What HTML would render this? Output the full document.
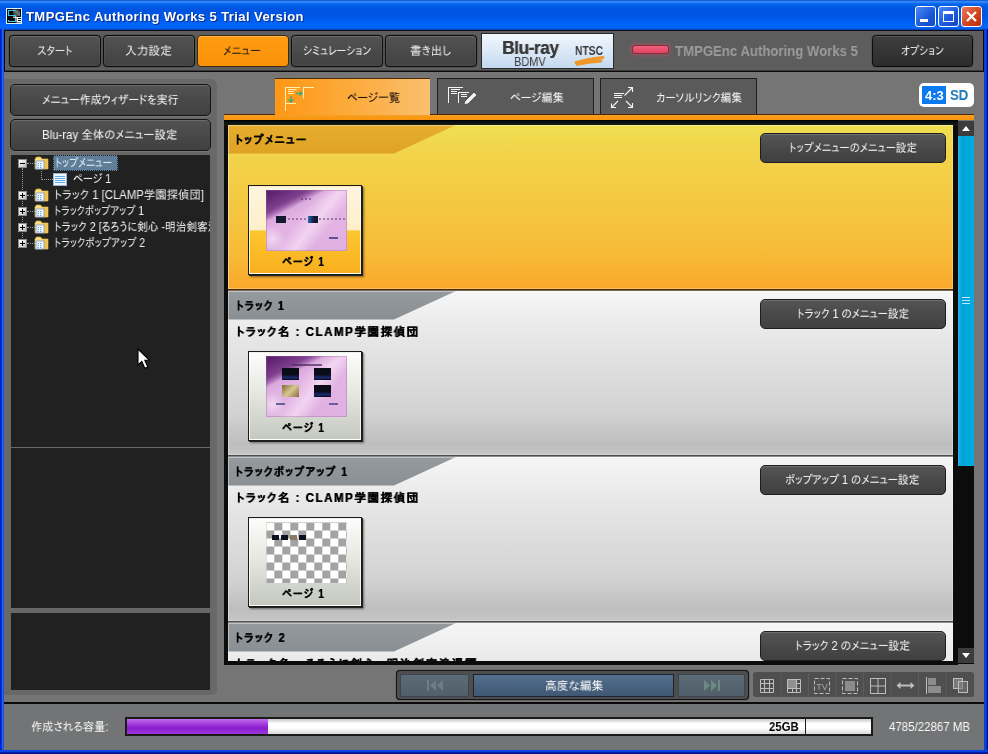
<!DOCTYPE html>
<html lang="ja">
<head>
<meta charset="utf-8">
<title>TMPGEnc Authoring Works 5 Trial Version</title>
<style>
html,body{margin:0;padding:0;}
body{width:988px;height:754px;overflow:hidden;position:relative;background:#0a46d6;
 font-family:"Liberation Sans","IPAPGothic","IPAGothic","Noto Sans CJK JP",sans-serif;font-size:12px;color:#fff;}
div,span{box-sizing:border-box;}
.a{position:absolute;}
.t{position:absolute;white-space:nowrap;transform-origin:0 50%;will-change:transform;}
#title{position:absolute;left:0;top:0;width:988px;height:30px;
 background:linear-gradient(#0a4fc6 0%,#3c8ffc 6%,#0a6bf0 12%,#0060e8 17%,#0055e3 26%,#0054e3 45%,#0058ea 60%,#0064fa 80%,#0066ff 90%,#0a5ae0 96%,#0038b0 100%);}
#client{position:absolute;left:4px;top:30px;width:980px;height:720px;background:#757575;}
#toolbar{position:absolute;left:4px;top:30px;width:980px;height:42px;background:#5d5d5d;border:1px solid #0a0a0a;border-top-color:#0c0c1c;box-shadow:inset 0 -1px 0 #3a3a3a;}
.tbtn{position:absolute;top:35px;height:32px;width:92px;border:1px solid #0c0c0c;border-radius:4px;
 background:linear-gradient(#535353,#484848 60%,#424242);box-shadow:inset 0 1px 0 #6c6c6c,inset 0 0 0 1px rgba(255,255,255,.05),0 0 1px #000;
 text-align:center;line-height:29px;font-size:12px;color:#f0f0f0;white-space:nowrap;}
.tbtn.on{background:linear-gradient(#ff9c12,#fb9208);color:#111;box-shadow:inset 0 1px 0 #ffb648;border-color:#3a2a10;}
.tbtn.dark{background:linear-gradient(#3e3e3e,#2c2c2c);box-shadow:inset 0 1px 0 #585858,0 0 1px #000;}
#bdbox{position:absolute;left:481px;top:33px;width:133px;height:36px;border:1px solid #2a2a2a;
 background:linear-gradient(#f2f7fd,#d9e7f6 55%,#c3d9f0);}
#led{position:absolute;left:632px;top:45px;width:37px;height:9px;border-radius:3px;background:linear-gradient(#f0607c,#e04462);border:1px solid #8a2a3a;box-shadow:0 0 4px 1px rgba(255,80,110,.4);}
#lpanel{position:absolute;left:4px;top:79px;width:213px;height:616px;background:#686868;border-radius:0 6px 6px 0;}
.lbtn{position:absolute;left:10px;width:201px;height:32px;border:1px solid #141414;border-radius:5px;
 background:linear-gradient(#535353,#474747 60%,#414141);box-shadow:inset 0 1px 0 #6c6c6c,0 1px 0 #777;
 text-align:center;line-height:29px;font-size:12px;color:#f0f0f0;white-space:nowrap;}
.tree{position:absolute;left:11px;width:199px;background:#212121;overflow:hidden;}
.exp{position:absolute;width:9px;height:9px;background:linear-gradient(135deg,#fff,#c0c0c0);border:1px solid #8a8a8a;}
.exp:before{content:"";position:absolute;left:1px;top:3px;width:5px;height:1px;background:#000;}
.exp.plus:after{content:"";position:absolute;left:3px;top:1px;width:1px;height:5px;background:#000;}
/* tabs */
.tab{position:absolute;top:78px;height:37px;border:1px solid #1e1e1e;border-bottom:none;background:#5a5a5a;color:#f0f0f0;font-size:12px;line-height:36px;white-space:nowrap;}
.tab.on{background:linear-gradient(90deg,#ff9716,#fcab3c 50%,#fabf70);border:none;border-top:1px solid #4a2c08;color:#111;}
#obar{position:absolute;left:224px;top:115px;width:750px;height:5px;background:linear-gradient(#f0a030,#fa9a12 40%,#f8960e);}
#frame{position:absolute;left:224px;top:120px;width:734px;height:545px;background:linear-gradient(#000,#0a1418 3px,#1a1c08 5px,#0c0c0c 6px);}
#content{position:absolute;left:228px;top:125px;width:725px;height:536px;overflow:hidden;background:#444;}
.sec{position:absolute;left:0;width:725px;height:166px;overflow:hidden;}
.sec:before{content:'';position:absolute;left:0;top:164px;width:725px;height:2px;z-index:3;}
.sec.y:before{background:linear-gradient(#4a2c04 0 1px,#7a6a50 1px 2px);}
.sec.g:before{background:linear-gradient(#4e4e4e 0 1px,#8c8c8c 1px 2px);}
.sec .edge{position:absolute;left:0;top:0;width:725px;height:164px;box-shadow:inset 1px 1px 0 rgba(255,255,255,.4),inset -1px -1px 0 rgba(255,255,255,.25);}
.sec.y{background:no-repeat 0 0/100% 164px linear-gradient(#eee052 0%,#f2d64c 12%,#f4c942 45%,#f7bb38 78%,#faa82c 100%);}
.sec.g{background:no-repeat 0 0/100% 164px linear-gradient(#f6f6f6 0%,#e6e6e6 30%,#d2d2d2 75%,#bebebe 93%,#c6c6c6 100%);}
.ban{position:absolute;left:0;top:0;width:232px;height:28.5px;clip-path:polygon(0 0,228px 0,166px 100%,0 100%);}
.sec.y .ban{background:linear-gradient(#e6ae2e,#dfa224);}
.sec.g .ban{background:linear-gradient(#959a9e,#8a8f93);}
.sbtn{position:absolute;left:532px;top:8px;width:186px;height:30px;border:1px solid #1e1e1e;border-radius:5px;
 background:linear-gradient(#555,#484848 55%,#404040);box-shadow:inset 0 1px 0 #707070;
 text-align:center;line-height:28px;font-size:12px;color:#f0f0f0;white-space:nowrap;}
.th{position:absolute;left:20px;width:114px;height:90px;border:1px solid #1a1a1a;box-shadow:1px 1px 0 #222,2px 2px 2px rgba(0,0,0,.45);}
.th .in{position:absolute;left:0;top:0;width:112px;height:88px;border:1px solid rgba(255,255,255,.75);}
.th.y .in{background:linear-gradient(#fff6e0 0%,#fdeec8 50%,#fcc62e 51%,#f9b01e 100%);}
.th.g .in{background:linear-gradient(#fdfdfb 0%,#e6e8e2 45%,#c4c8be 100%);}
.th .img{position:absolute;left:17px;top:4px;width:81px;height:61px;overflow:hidden;}
.purple{background:linear-gradient(152deg,#561a66 0%,#6a2c7c 12%,#80428f 22%,rgba(150,90,165,.85) 26%,rgba(205,150,210,.35) 31%,rgba(220,170,224,0) 40%),linear-gradient(128deg,rgba(255,255,255,0) 42%,rgba(255,240,255,.55) 58%,rgba(255,255,255,0) 72%),radial-gradient(circle 13px at 8% 80%,rgba(255,255,255,.5) 0,rgba(255,255,255,0) 100%),linear-gradient(#e4b6e4,#e0b0e2);box-shadow:inset 0 0 0 1px rgba(150,100,150,.35);}
.checker{background-color:#fff;background-image:conic-gradient(#a2a2a2 25%,#fff 0 50%,#a2a2a2 0 75%,#fff 0);background-size:16px 16px;background-position:.3px .5px;}
/* scrollbar */
#sbar{position:absolute;left:958px;top:121px;width:16px;height:543px;background:#0c0c0c;}
.sarr{position:absolute;left:0;width:16px;height:15px;background:#3c3c3c;}
.sarr i{position:absolute;left:4px;width:0;height:0;border-left:4px solid transparent;border-right:4px solid transparent;}
#sthumb{position:absolute;left:0;top:15px;width:16px;height:330px;background:linear-gradient(90deg,#2cb2e8 0,#02a2d4 25%,#00a8dc 60%,#04aee2 100%);}
/* bottom */
#navbox{position:absolute;left:396px;top:670px;width:353px;height:30px;border:1px solid #141414;border-radius:4px;background:#4e4e4e;box-shadow:0 0 1px #000;}
.nb{position:absolute;top:674px;height:23px;border:1px solid #3c4650;}
#istrip{will-change:transform;position:absolute;left:753px;top:672px;width:221px;height:25px;background:#4f4f4f;border-radius:3px;}
#hline{position:absolute;left:4px;top:702px;width:980px;height:2px;background:#0a0a0a;}
#status{position:absolute;left:4px;top:704px;width:980px;height:46px;background:#737475;}
#pbar{position:absolute;left:125px;top:717px;width:748px;height:19px;border:2px solid #1a1a1a;background:linear-gradient(#c8c8c8 0%,#fff 30%,#fff 60%,#d8d8d8 100%);}
#pfill{position:absolute;left:0;top:0;width:141px;height:15px;background:linear-gradient(#c070e8 0%,#a840e0 30%,#8a1ccc 60%,#9c38dc 100%);}
</style>
</head>
<body>
<div id="title"></div><span class="t" style="left:26.0px;top:8.0px;font-size:13px;line-height:17px;color:#fff;transform:scaleX(1.003);font-weight:bold;letter-spacing:.4px;text-shadow:1px 1px 0 #0a2a80;">TMPGEnc Authoring Works 5 Trial Version</span>
<div class="a" style="left:0;top:29px;width:4px;height:725px;background:linear-gradient(90deg,#0019cf 0 1px,#0831d9 1px 2px,#2264f0 2px 3px,#1a55d0 3px 4px)"></div><div class="a" style="left:984px;top:29px;width:4px;height:725px;background:linear-gradient(90deg,#0b3fd2 0 1px,#0a46e0 1px 2px,#0630c8 2px 3px,#001396 3px 4px)"></div><div class="a" style="left:0;top:750px;width:988px;height:4px;background:linear-gradient(#0a45e0 0 1px,#0a40d8 1px 2px,#021ea8 2px 3px,#00158f 3px 4px)"></div>
<div id="client"></div>
<div id="toolbar"></div>
<div class="tbtn " style="left:9px;width:92px"></div><span class="t" style="left:36.7px;top:42.5px;font-size:12px;line-height:16px;color:#f0f0f0;transform:scaleX(0.875);">スタート</span>
<div class="tbtn " style="left:103px;width:92px"></div><span class="t" style="left:125.3px;top:42.5px;font-size:12px;line-height:16px;color:#f0f0f0;transform:scaleX(0.975);">入力設定</span>
<div class="tbtn on" style="left:197px;width:92px"></div><span class="t" style="left:222.5px;top:42.5px;font-size:12px;line-height:16px;color:#111;transform:scaleX(0.916);">メニュー</span>
<div class="tbtn " style="left:291px;width:92px"></div><span class="t" style="left:302.8px;top:42.5px;font-size:12px;line-height:16px;color:#f0f0f0;transform:scaleX(0.858);">シミュレーション</span>
<div class="tbtn " style="left:385px;width:92px"></div><span class="t" style="left:410.0px;top:42.5px;font-size:12px;line-height:16px;color:#f0f0f0;transform:scaleX(0.953);">書き出し</span>
<div class="tbtn dark" style="left:872px;width:101px"></div><span class="t" style="left:901.2px;top:42.5px;font-size:12px;line-height:16px;color:#f0f0f0;transform:scaleX(0.849);">オプション</span>
<div id="bdbox"><svg class="a" style="left:92px;top:22px" width="32" height="10" viewBox="0 0 32 10"><path d="M2 6.500C9 4.500,17 3,29 1.500M3 8.500C12 6.500,20 5.500,27 5" stroke="#f0962a" stroke-width="2.800" fill="none" stroke-linecap="round"/></svg></div>
<span class="t" style="left:501.6px;top:35.5px;font-size:19px;line-height:23px;color:#3a3a3a;transform:scaleX(0.910);font-weight:bold;letter-spacing:-.5px;text-shadow:.4px 0 0 #3a3a3a;">Blu-ray</span><span class="t" style="left:514.3px;top:52.5px;font-size:13px;line-height:17px;color:#3a3a3a;transform:scaleX(0.844);">BDMV</span><span class="t" style="left:575.0px;top:41.5px;font-size:13px;line-height:17px;color:#3a3a3a;transform:scaleX(0.791);font-weight:bold;">NTSC</span>
<div id="led"></div>
<span class="t" style="left:675.0px;top:40.5px;font-size:15px;line-height:19px;color:#9c9c9c;transform:scaleX(0.878);font-weight:bold;">TMPGEnc Authoring Works 5</span>
<div id="lpanel"></div>
<div class="lbtn" style="top:84px"></div><span class="t" style="left:41.8px;top:91.6px;font-size:12px;line-height:16px;color:#fafafa;transform:scaleX(0.918);">メニュー作成ウィザードを実行</span>
<div class="lbtn" style="top:119px"></div><span class="t" style="left:41.8px;top:126.7px;font-size:12px;line-height:16px;color:#fafafa;transform:scaleX(0.953);">Blu-ray 全体のメニュー設定</span>
<div class="tree" style="top:155px;height:292px"></div>
<div class="tree" style="top:448px;height:160px"></div>
<div class="tree" style="top:613px;height:77px"></div>
<div class="a" style="left:22px;top:168px;width:1px;height:76px;border-left:1px dotted #999"></div>
<div class="a" style="left:41px;top:171px;width:1px;height:9px;border-left:1px dotted #999"></div>
<div class="a" style="left:41px;top:179px;width:12px;height:1px;border-top:1px dotted #999"></div>
<div class="a" style="left:27px;top:163px;width:8px;height:1px;border-top:1px dotted #999"></div>
<div class="exp " style="left:18px;top:159px"></div>
<svg class="a" style="left:34px;top:156px" width="15" height="14" viewBox="0 0 15 14"><path d="M1 3 L1 13 L14 13 L14 3 L8 3 L6.5 1 L2.5 1 Z" fill="#fadf84" stroke="#d8b040" stroke-width=".7"/><path d="M10 3.500 L13.600 3.500 L13.600 12.600 L10 12.600 Z" fill="#f3c24c"/><rect x="2" y="5" width="8" height="8" fill="#f4f8ff" stroke="#7a9ac8" stroke-width=".8"/><path d="M3.500 7.500h5M3.500 9.500h5M3.500 11.500h5" stroke="#6aa2e4" stroke-width="1" stroke-dasharray="1.500 1"/></svg>
<div class="a" style="left:53px;top:155px;width:65px;height:16px;background:#5f7e9a;border:1px dotted #1c2630"></div>
<span class="t" style="left:54.9px;top:155.0px;font-size:12px;line-height:16px;color:#e8f0f8;transform:scaleX(0.830);">トップメニュー</span>
<svg class="a" style="left:53px;top:173px" width="14" height="13" viewBox="0 0 14 13"><rect x=".5" y=".5" width="13" height="12" fill="#eef4fc" stroke="#9ab4d8"/><path d="M2 3.500h10M2 5.500h10M2 7.500h10M2 9.500h10" stroke="#62aeea" stroke-width="1"/></svg>
<span class="t" style="left:72.8px;top:171.0px;font-size:12px;line-height:16px;color:#fafafa;transform:scaleX(0.871);">ページ 1</span>
<div class="a" style="left:27px;top:195px;width:8px;height:1px;border-top:1px dotted #999"></div>
<div class="exp plus" style="left:18px;top:191px"></div>
<svg class="a" style="left:34px;top:188px" width="15" height="14" viewBox="0 0 15 14"><path d="M1 3 L1 13 L14 13 L14 3 L8 3 L6.5 1 L2.5 1 Z" fill="#fadf84" stroke="#d8b040" stroke-width=".7"/><path d="M10 3.500 L13.600 3.500 L13.600 12.600 L10 12.600 Z" fill="#f3c24c"/><rect x="2" y="5" width="8" height="8" fill="#f4f8ff" stroke="#7a9ac8" stroke-width=".8"/><path d="M3.500 7.500h5M3.500 9.500h5M3.500 11.500h5" stroke="#6aa2e4" stroke-width="1" stroke-dasharray="1.500 1"/></svg>
<span class="t" style="left:54.4px;top:187.0px;font-size:12px;line-height:16px;color:#f0f0f0;transform:scaleX(0.948);">トラック 1 [CLAMP学園探偵団]</span>
<div class="a" style="left:27px;top:211px;width:8px;height:1px;border-top:1px dotted #999"></div>
<div class="exp plus" style="left:18px;top:207px"></div>
<svg class="a" style="left:34px;top:204px" width="15" height="14" viewBox="0 0 15 14"><path d="M1 3 L1 13 L14 13 L14 3 L8 3 L6.5 1 L2.5 1 Z" fill="#fadf84" stroke="#d8b040" stroke-width=".7"/><path d="M10 3.500 L13.600 3.500 L13.600 12.600 L10 12.600 Z" fill="#f3c24c"/><rect x="2" y="5" width="8" height="8" fill="#f4f8ff" stroke="#7a9ac8" stroke-width=".8"/><path d="M3.500 7.500h5M3.500 9.500h5M3.500 11.500h5" stroke="#6aa2e4" stroke-width="1" stroke-dasharray="1.500 1"/></svg>
<span class="t" style="left:54.4px;top:203.0px;font-size:12px;line-height:16px;color:#f0f0f0;transform:scaleX(0.837);">トラックポップアップ 1</span>
<div class="a" style="left:27px;top:227px;width:8px;height:1px;border-top:1px dotted #999"></div>
<div class="exp plus" style="left:18px;top:223px"></div>
<svg class="a" style="left:34px;top:220px" width="15" height="14" viewBox="0 0 15 14"><path d="M1 3 L1 13 L14 13 L14 3 L8 3 L6.5 1 L2.5 1 Z" fill="#fadf84" stroke="#d8b040" stroke-width=".7"/><path d="M10 3.500 L13.600 3.500 L13.600 12.600 L10 12.600 Z" fill="#f3c24c"/><rect x="2" y="5" width="8" height="8" fill="#f4f8ff" stroke="#7a9ac8" stroke-width=".8"/><path d="M3.500 7.500h5M3.500 9.500h5M3.500 11.500h5" stroke="#6aa2e4" stroke-width="1" stroke-dasharray="1.500 1"/></svg>
<div class="a" style="left:11px;top:219px;width:199px;height:16px;overflow:hidden"><span class="t" style="left:43.4px;top:0.0px;font-size:12px;line-height:16px;color:#fafafa;transform:scaleX(0.890);">トラック 2 [るろうに剣心 -明治剣客浪漫譚-]</span></div>
<div class="a" style="left:27px;top:243px;width:8px;height:1px;border-top:1px dotted #999"></div>
<div class="exp plus" style="left:18px;top:239px"></div>
<svg class="a" style="left:34px;top:236px" width="15" height="14" viewBox="0 0 15 14"><path d="M1 3 L1 13 L14 13 L14 3 L8 3 L6.5 1 L2.5 1 Z" fill="#fadf84" stroke="#d8b040" stroke-width=".7"/><path d="M10 3.500 L13.600 3.500 L13.600 12.600 L10 12.600 Z" fill="#f3c24c"/><rect x="2" y="5" width="8" height="8" fill="#f4f8ff" stroke="#7a9ac8" stroke-width=".8"/><path d="M3.500 7.500h5M3.500 9.500h5M3.500 11.500h5" stroke="#6aa2e4" stroke-width="1" stroke-dasharray="1.500 1"/></svg>
<span class="t" style="left:54.4px;top:235.0px;font-size:12px;line-height:16px;color:#f0f0f0;transform:scaleX(0.847);">トラックポップアップ 2</span>
<div class="tab on" style="left:275px;width:155px"><svg class="a" style="left:0;top:0" width="50" height="36" viewBox="0 0 50 36" fill="none" stroke="#fff2b0" stroke-width="1"><path d="M10.500 8v24M10 8.500h15M13 10.500h8.500M13 12.500h6M13 14.500h6M10 24.500h11M28.500 8v11.500M28 8.500h11"/><path d="M21 14.500h6M24.500 12.500l2.500 2l-2.500 2M16 17v6M13.500 20.500l2.500 2.500l2.500-2.500" stroke="#3aa878" stroke-width="1.3"/></svg></div><span class="t" style="left:346.6px;top:90.0px;font-size:12px;line-height:16px;color:#000;transform:scaleX(0.922);">ページ一覧</span>
<div class="tab" style="left:437px;width:157px"><svg class="a" style="left:0;top:1px" width="50" height="34" viewBox="0 0 50 34" fill="none" stroke="#f4f4f4" stroke-width="1"><path d="M10.500 7v16M10 7.500h15M13 9.500h9M13 11.500h6M13 13.500h6M20.500 12v11M20 12.500h11M23 14.500h6M23 16.500h6"/><path d="M27 23.500l1-2.500l8-8l2 2l-8 8z" fill="#f4f4f4" stroke="#f4f4f4" stroke-width=".8"/></svg></div><span class="t" style="left:509.8px;top:90.0px;font-size:12px;line-height:16px;color:#fafafa;transform:scaleX(0.936);">ページ編集</span>
<div class="tab" style="left:600px;width:157px"><svg class="a" style="left:0;top:1px" width="50" height="34" viewBox="0 0 50 34" fill="none" stroke="#f4f4f4" stroke-width="1.1"><path d="M13 13.500h10M13 15.500h8M13 17.500h8M23.500 15.500l8-8M27 7.500h4.500v4.500M17 21l-6.500 6.500M10.500 23.500v4h4.500M25 21l6.500 6.500M31.500 23v4.500h-4.500"/></svg></div><span class="t" style="left:656.3px;top:90.0px;font-size:12px;line-height:16px;color:#fafafa;transform:scaleX(0.894);">カーソルリンク編集</span>
<div class="a" style="left:919px;top:83px;width:55px;height:24px;background:#fff;border-radius:5px"></div>
<div class="a" style="left:922px;top:86px;width:24px;height:18px;background:#0a7aee"></div>
<span class="t" style="left:924.6px;top:86.7px;font-size:13px;line-height:17px;color:#fff;transform:scaleX(0.979);font-weight:bold;">4:3</span><span class="t" style="left:949.7px;top:86.2px;font-size:14px;line-height:18px;color:#1a76bc;transform:scaleX(0.941);font-weight:bold;">SD</span>
<div id="obar"></div><div class="a" style="left:224px;top:114px;width:51px;height:1px;background:#4a2c08"></div><div class="a" style="left:430px;top:114px;width:544px;height:1px;background:#4a2c08"></div>
<div id="frame"></div>
<div id="content">
<div class="sec y" style="top:0px"><div class="ban"></div><div class="edge"></div><span class="t" style="left:7.4px;top:6.7px;font-size:12px;line-height:16px;color:#000;transform:scaleX(0.903);font-weight:bold;text-shadow:.5px 0 0 #000;letter-spacing:1.6px;">トップメニュー</span><div class="sbtn"></div><span class="t" style="left:560.6px;top:15.0px;font-size:12px;line-height:16px;color:#fafafa;transform:scaleX(0.879);">トップメニューのメニュー設定</span><div class="th y" style="top:60px"><div class="in"></div><div class="img purple"><div class="a" style="left:10px;top:26px;width:10px;height:7px;background:#141830"></div><div class="a" style="left:42px;top:26px;width:10px;height:7px;background:linear-gradient(90deg,#2a6ac0,#141830 60%)"></div><div class="a" style="left:22px;top:28px;width:18px;height:2px;border-top:2px dotted #4a2a5a;opacity:.45"></div><div class="a" style="left:53px;top:28px;width:26px;height:2px;border-top:2px dotted #4a2a5a;opacity:.45"></div><div class="a" style="left:35px;top:8px;width:10px;height:2px;border-top:2px dotted #3a1a4a;opacity:.45"></div><div class="a" style="left:63px;top:47px;width:9px;height:2px;background:#3a3a78;opacity:.8"></div></div></div><span class="t" style="left:53.9px;top:129.0px;font-size:12px;line-height:16px;color:#000;transform:scaleX(0.835);font-weight:bold;text-shadow:.5px 0 0 #000;letter-spacing:1.6px;">ページ 1</span></div>
<div class="sec g" style="top:166px"><div class="ban"></div><div class="edge"></div><span class="t" style="left:8.4px;top:6.7px;font-size:12px;line-height:16px;color:#000;transform:scaleX(0.866);font-weight:bold;text-shadow:.5px 0 0 #000;letter-spacing:1.6px;">トラック 1</span><span class="t" style="left:8.4px;top:32.6px;font-size:12px;line-height:16px;color:#000;transform:scaleX(0.961);font-weight:bold;text-shadow:.5px 0 0 #000;letter-spacing:1.6px;">トラック名 : CLAMP学園探偵団</span><div class="sbtn"></div><span class="t" style="left:569.0px;top:15.0px;font-size:12px;line-height:16px;color:#fafafa;transform:scaleX(0.884);">トラック 1 のメニュー設定</span><div class="th g" style="top:60px"><div class="in"></div><div class="img purple"><div class="a" style="left:16px;top:12px;width:17px;height:12px;background:linear-gradient(#0a0c18 55%,#1a2a70 80%,#0a0c18)"></div><div class="a" style="left:48px;top:12px;width:17px;height:12px;background:linear-gradient(#0a0c18 55%,#1a2a70 80%,#0a0c18)"></div><div class="a" style="left:16px;top:29px;width:17px;height:12px;background:linear-gradient(135deg,#7a6a30,#d8c890 50%,#8a6a40)"></div><div class="a" style="left:48px;top:29px;width:17px;height:12px;background:linear-gradient(#0a0c18 55%,#1a2a70 80%,#0a0c18)"></div><div class="a" style="left:26px;top:8px;width:30px;height:2px;background:#4a2a58;opacity:.7"></div><div class="a" style="left:10px;top:47px;width:9px;height:2px;background:#4a4a88;opacity:.8"></div><div class="a" style="left:63px;top:47px;width:9px;height:2px;background:#4a4a88;opacity:.8"></div></div></div><span class="t" style="left:53.9px;top:129.0px;font-size:12px;line-height:16px;color:#000;transform:scaleX(0.835);font-weight:bold;text-shadow:.5px 0 0 #000;letter-spacing:1.6px;">ページ 1</span></div>
<div class="sec g" style="top:332px"><div class="ban"></div><div class="edge"></div><span class="t" style="left:7.4px;top:6.7px;font-size:12px;line-height:16px;color:#000;transform:scaleX(0.896);font-weight:bold;text-shadow:.5px 0 0 #000;letter-spacing:1.6px;">トラックポップアップ 1</span><span class="t" style="left:8.4px;top:32.6px;font-size:12px;line-height:16px;color:#000;transform:scaleX(0.961);font-weight:bold;text-shadow:.5px 0 0 #000;letter-spacing:1.6px;">トラック名 : CLAMP学園探偵団</span><div class="sbtn"></div><span class="t" style="left:556.6px;top:15.0px;font-size:12px;line-height:16px;color:#fafafa;transform:scaleX(0.893);">ポップアップ 1 のメニュー設定</span><div class="th g" style="top:60px"><div class="in"></div><div class="img checker"><div class="a" style="left:6px;top:13px;width:7px;height:5px;background:#0c1020"></div><div class="a" style="left:15px;top:13px;width:7px;height:5px;background:#0c1020"></div><div class="a" style="left:24px;top:13px;width:7px;height:5px;background:#8a7a60"></div><div class="a" style="left:33px;top:13px;width:7px;height:5px;background:#0c1020"></div></div></div><span class="t" style="left:53.9px;top:129.0px;font-size:12px;line-height:16px;color:#000;transform:scaleX(0.835);font-weight:bold;text-shadow:.5px 0 0 #000;letter-spacing:1.6px;">ページ 1</span></div>
<div class="sec g" style="top:498px"><div class="ban"></div><div class="edge"></div><span class="t" style="left:7.4px;top:6.7px;font-size:12px;line-height:16px;color:#000;transform:scaleX(0.900);font-weight:bold;text-shadow:.5px 0 0 #000;letter-spacing:1.6px;">トラック 2</span><span class="t" style="left:8.4px;top:32.6px;font-size:12px;line-height:16px;color:#000;transform:scaleX(0.961);font-weight:bold;text-shadow:.5px 0 0 #000;letter-spacing:1.6px;">トラック名 : るろうに剣心 -明治剣客浪漫譚-</span><div class="sbtn"></div><span class="t" style="left:567.2px;top:15.0px;font-size:12px;line-height:16px;color:#fafafa;transform:scaleX(0.908);">トラック 2 のメニュー設定</span></div>
</div>
<div id="sbar"><div class="sarr" style="top:0"><i style="top:5px;border-bottom:5px solid #fff"></i></div><div id="sthumb"><div class="a" style="left:4px;top:161px;width:8px;height:1px;background:#bfe8fa;box-shadow:0 3px 0 #bfe8fa,0 6px 0 #bfe8fa"></div></div><div class="sarr" style="top:527px"><i style="top:5px;border-top:5px solid #fff"></i></div></div>
<div id="navbox"></div>
<div class="nb" style="left:400px;width:69px;background:linear-gradient(#5c6a76,#515f6b)"><svg class="a" style="left:25px;top:5px" width="18" height="11" viewBox="0 0 18 11"><path d="M1 0h2v11h-2zM10 0v11l-6-5.500zM17 0v11l-6-5.500z" fill="#6e7c88"/></svg></div>
<div class="nb" style="left:473px;width:201px;background:linear-gradient(#54708f,#48627f 50%,#405874);border-color:#1a2430;"></div><span class="t" style="left:545.0px;top:677.7px;font-size:12px;line-height:16px;color:#fafafa;transform:scaleX(0.980);">高度な編集</span>
<div class="nb" style="left:678px;width:67px;background:linear-gradient(#5c6a76,#515f6b)"><svg class="a" style="left:24px;top:5px" width="18" height="11" viewBox="0 0 18 11"><path d="M15 0h2v11h-2zM8 0v11l6-5.500zM1 0v11l6-5.500z" fill="#6a8a82"/></svg></div>
<div id="istrip"><svg class="a" style="left:0;top:0" width="221" height="25" viewBox="0 0 221 25"><path d="M7.500 7.500h13v13h-13zM11.500 7.500v13M16.500 7.500v13M7.500 11.500h13M7.500 16.500h13" fill="none" stroke="#bdbdbd"/><rect x="34" y="7" width="9" height="9" fill="#909090"/><path d="M34.500 7.500h13v13h-13zM43.500 7.500v13M34.500 16.500h13M39.500 16.500v4M43.500 11.500h4" fill="none" stroke="#bdbdbd"/><rect x="61.500" y="6.500" width="15" height="15" fill="none" stroke="#bdbdbd" stroke-dasharray="4 2"/><text x="69" y="17.500" font-size="9" fill="#a8a8a8" text-anchor="middle" font-family="Liberation Sans,sans-serif">TV</text><rect x="89.500" y="6.500" width="15" height="15" fill="none" stroke="#bdbdbd" stroke-dasharray="4 2"/><rect x="92" y="9" width="10" height="10" fill="#8c8c8c"/><path d="M117.500 6.500h15v15h-15zM125 6.500v15M117.500 14h15" fill="none" stroke="#bdbdbd"/><path d="M146 13.500h14" stroke="#bdbdbd" stroke-width="2" fill="none"/><path d="M143.500 13.500l4-3.500v7zM161.500 13.500l-4-3.500v7z" fill="#bdbdbd"/><path d="M173.500 5v17" stroke="#bdbdbd"/><rect x="175" y="6" width="8" height="7" fill="#8c8c8c"/><rect x="175" y="14" width="13" height="7" fill="#8c8c8c"/><rect x="200.500" y="6.500" width="9" height="10" fill="#7a7a7a" stroke="#bdbdbd"/><rect x="205.500" y="9.500" width="9" height="11" fill="#7a7a7a" fill-opacity=".6" stroke="#bdbdbd"/><path d="M28.0 1v23" stroke="#5c5c5c"/><path d="M55.5 1v23" stroke="#5c5c5c"/><path d="M83.0 1v23" stroke="#5c5c5c"/><path d="M110.5 1v23" stroke="#5c5c5c"/><path d="M138.0 1v23" stroke="#5c5c5c"/><path d="M165.5 1v23" stroke="#5c5c5c"/><path d="M193.0 1v23" stroke="#5c5c5c"/></svg></div>
<div id="hline"></div><div id="status"></div>
<span class="t" style="left:31.0px;top:718.6px;font-size:12px;line-height:16px;color:#fafafa;transform:scaleX(0.935);">作成される容量:</span>
<div id="pbar"><div id="pfill"></div><div class="a" style="left:678px;top:-2px;width:1px;height:19px;background:#1a1a1a"></div></div><span class="t" style="left:769.0px;top:718.1px;font-size:13px;line-height:17px;color:#000;transform:scaleX(0.874);font-weight:bold;">25GB</span>
<span class="t" style="left:889.4px;top:718.6px;font-size:12px;line-height:16px;color:#fafafa;transform:scaleX(0.956);">4785/22867 MB</span>
<div class="a" style="left:915px;top:6px;width:21px;height:21px;border:1px solid #fff;border-radius:3px;background:linear-gradient(135deg,#4a8af4,#1a56d8 60%,#1448c0)"><div class="a" style="left:4px;top:12px;width:8px;height:3px;background:#fff"></div></div>
<div class="a" style="left:938px;top:6px;width:21px;height:21px;border:1px solid #fff;border-radius:3px;background:linear-gradient(135deg,#4a8af4,#1a56d8 60%,#1448c0)"><div class="a" style="left:4px;top:4px;width:11px;height:11px;border:1px solid #fff;border-top:3px solid #fff"></div></div>
<div class="a" style="left:961px;top:6px;width:21px;height:21px;border:1px solid #fff;border-radius:3px;background:linear-gradient(135deg,#e87a5a,#d0401c 60%,#b83010)"><svg class="a" style="left:3px;top:3px" width="13" height="13" viewBox="0 0 13 13"><path d="M2 2l9 9M11 2l-9 9" stroke="#fff" stroke-width="2.2"/></svg></div>
<svg class="a" style="left:6px;top:8px" width="16" height="16" viewBox="0 0 16 16"><defs><linearGradient id="ig" x1="0" y1="1" x2="1" y2="0"><stop offset="0" stop-color="#222"/><stop offset=".6" stop-color="#777"/><stop offset="1" stop-color="#111"/></linearGradient></defs><rect x="0" y="0" width="16" height="16" fill="#d8f4fc"/><rect x="1" y="1" width="14" height="14" fill="#06080c"/><rect x="7" y="1.500" width="7" height="6.500" fill="url(#ig)"/><path d="M9.500 2.500H2.500V7.500H9.500V13.500H2.500V12" fill="none" stroke="#3ec4e4" stroke-width="1.200"/><rect x="10.500" y="9" width="4.500" height="5.500" fill="#fff"/><path d="M12 10.500h3M12 12.500h3" stroke="#06080c" stroke-width="1"/><path d="M7 9.200h4" stroke="#fff" stroke-width="1.100"/></svg>
<svg class="a" style="left:137px;top:348px" width="13" height="21" viewBox="0 0 13 21"><path d="M1 1V17L4.800 13.500L7.800 20.300L10.800 19L7.800 12.300H12.500Z" fill="#fff" stroke="#000" stroke-width="1.100" stroke-linejoin="miter"/></svg>
</body>
</html>
